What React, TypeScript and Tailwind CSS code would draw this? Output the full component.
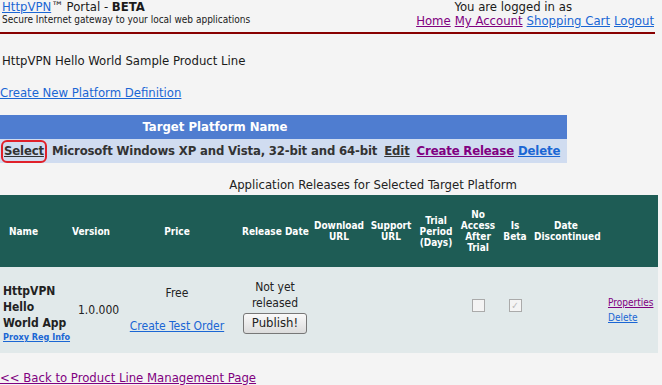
export default function App() {
  const font = { fontFamily: '"DejaVu Sans Condensed", "DejaVu Sans", Tahoma, sans-serif' };
  return (
    <div className="w-[662px] h-[385px] overflow-hidden bg-[#f4f4f4] text-[#1a1a1a]" style={font}>
      {/* Header */}
      <div className="flex justify-between pr-[8px]">
        <div className="pl-[2px]">
          <div className="text-[13px] leading-[14px]">
            <a className="text-[#1a66d4] underline">HttpVPN</a>™ Portal - <b>BETA</b>
          </div>
          <div className="text-[10px] leading-[12px]">Secure Internet gateway to your local web applications</div>
        </div>
        <div className="flex flex-col items-end text-[13px] leading-[14px]">
          <div className="pr-[82px]">You are logged in as</div>
          <div className="flex gap-[4px]">
            <a className="text-[#800080] underline">Home</a>
            <a className="text-[#800080] underline">My Account</a>
            <a className="text-[#1a66d4] underline">Shopping Cart</a>
            <a className="text-[#1a66d4] underline">Logout</a>
          </div>
        </div>
      </div>
      <div className="mt-[4px] h-[2px] w-[655px] bg-[#880000]" />

      <div className="mt-[19px] pl-[2px] text-[13px] leading-[15px]">HttpVPN Hello World Sample Product Line</div>
      <div className="mt-[17px] text-[13px] leading-[15px]">
        <a className="text-[#1a66d4] underline">Create New Platform Definition</a>
      </div>

      {/* Target platform */}
      <div className="mt-[15px] w-[567px]">
        <div className="h-[24px] bg-[#4f7dd0] flex items-center text-white font-bold text-[13px]">
          <div className="w-[430px] text-center">Target Platform Name</div>
        </div>
        <div className="h-[24px] bg-[#d0dcf0] flex items-center whitespace-nowrap text-[13px] font-bold text-[#333] tracking-[-0.15px]">
          <span className="ml-[1px] h-[23px] px-[1px] flex items-center border-2 border-[#e0202a] rounded-[6px] underline">
            Select
          </span>
          <span className="ml-[5px]">Microsoft Windows XP and Vista, 32-bit and 64-bit</span>
          <a className="ml-[7px] underline">Edit</a>
          <a className="ml-[7px] text-[#800080] underline">Create Release</a>
          <a className="ml-[4px] text-[#1a66d4] underline">Delete</a>
        </div>
      </div>

      <div className="mt-[15px] pl-[84px] text-center w-[662px] text-[13px] leading-[14px] text-[#222]">
        Application Releases for Selected Target Platform
      </div>

      {/* Releases table */}
      <table className="mt-[3px] w-[658px] table-fixed border-collapse">
        <thead>
          <tr className="h-[72px] bg-[#1e5c55] text-white text-[10px] leading-[11px] font-bold">
            <th className="w-[70px] text-left pl-[9px]">Name</th>
            <th className="w-[42px]">Version</th>
            <th className="w-[130px]">Price</th>
            <th className="w-[66px] whitespace-nowrap">Release Date</th>
            <th className="w-[62px]">Download<br />URL</th>
            <th className="w-[42px]">Support<br />URL</th>
            <th className="w-[48px]">Trial<br />Period<br />(Days)</th>
            <th className="w-[36px]">No<br />Access<br />After<br />Trial</th>
            <th className="w-[38px]">Is<br />Beta</th>
            <th className="w-[64px]">Date<br />Discontinued</th>
            <th />
          </tr>
        </thead>
        <tbody>
          <tr className="h-[86px] bg-[#e1e9ea] text-[12px] text-[#222]">
            <td className="pl-[3px] align-middle">
              <div className="font-bold leading-[16px] pt-[6px]">HttpVPN<br />Hello<br />World App</div>
              <a className="block text-[9px] leading-[12px] font-bold text-[#1a66d4] underline whitespace-nowrap">Proxy Reg Info</a>
            </td>
            <td className="text-center pl-[8px]">1.0.000</td>
            <td className="text-center">
              <div className="leading-[16px]">Free</div>
              <a className="block mt-[16px] text-[#1a66d4] underline">Create Test Order</a>
            </td>
            <td className="text-center leading-[16px] pb-[8px]">
              <div>Not yet<br />released</div>
              <button className="mt-[2px] px-[8px] h-[21px] text-[13px] rounded-[3px] border border-[#777] bg-gradient-to-b from-[#fafafa] to-[#dcdcdc]">
                Publish!
              </button>
            </td>
            <td />
            <td />
            <td />
            <td className="text-center pb-[10px]">
              <span className="inline-block w-[13px] h-[13px] border border-[#aaa] bg-[#f4f4f4] align-middle" />
            </td>
            <td className="text-center pb-[10px]">
              <span className="inline-flex items-center justify-center w-[13px] h-[13px] border border-[#aaa] bg-[#f4f4f4] align-middle text-[#bbb] text-[10px] leading-none">
                ✓
              </span>
            </td>
            <td />
            <td className="pl-[10px] text-[10px] leading-[15px] align-middle">
              <a className="block text-[#800080] underline">Properties</a>
              <a className="block text-[#1a66d4] underline">Delete</a>
            </td>
          </tr>
        </tbody>
      </table>

      <div className="mt-[17px] text-[13px] leading-[15px]">
        <a className="text-[#800080] underline">&lt;&lt; Back to Product Line Management Page</a>
      </div>
    </div>
  );
}
